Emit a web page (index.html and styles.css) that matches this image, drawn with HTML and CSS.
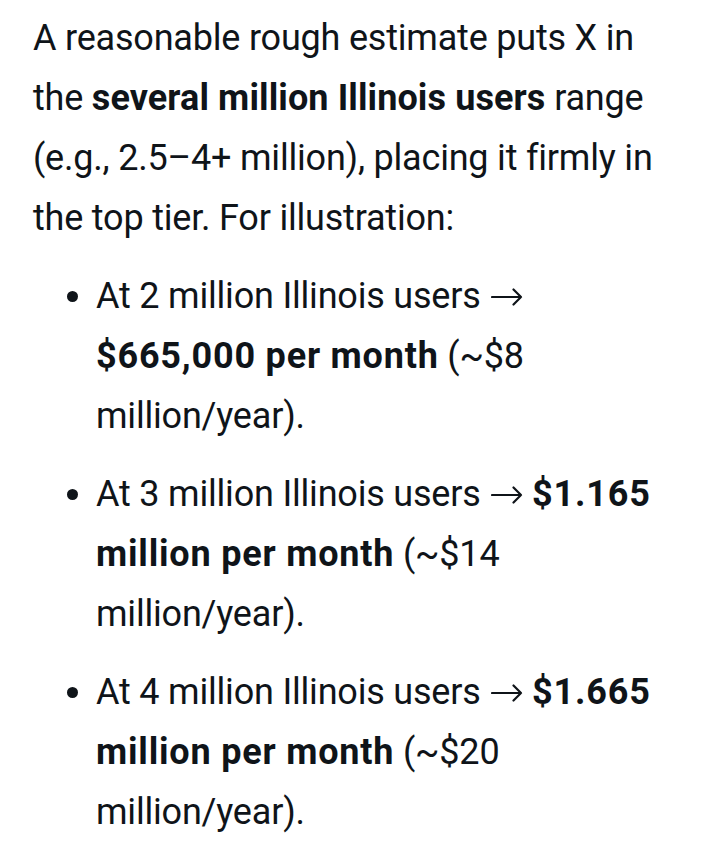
FILE: index.html
```html
<!DOCTYPE html>
<html>
<head>
<meta charset="utf-8">
<link rel="stylesheet" href="styles.css">
</head>
<body>
<div class="content">
  <p class="para">A reasonable rough estimate puts X in the <strong>several million Illinois users</strong> range (e.g., 2.5–4+ million), placing it firmly in the top tier. For illustration:</p>
  <ul class="list">
    <li>At 2 million Illinois users <svg class="arrow" viewBox="0 0 32 18" aria-label="→"><path d="M1 9H30M22.5 1.5L30 9L22.5 16.5"/></svg> <strong>$665,000 per month</strong> (~$8 million/year).</li>
    <li>At 3 million Illinois users <svg class="arrow" viewBox="0 0 32 18" aria-label="→"><path d="M1 9H30M22.5 1.5L30 9L22.5 16.5"/></svg> <strong>$1.165 million per month</strong> (~$14 million/year).</li>
    <li>At 4 million Illinois users <svg class="arrow" viewBox="0 0 32 18" aria-label="→"><path d="M1 9H30M22.5 1.5L30 9L22.5 16.5"/></svg> <strong>$1.665 million per month</strong> (~$20 million/year).</li>
  </ul>
</div>
</body>
</html>
```
FILE: styles.css
```css
html, body {
  margin: 0;
  padding: 0;
  background: #ffffff;
}
.content {
  width: 627px;
  padding: 8px 0 0 33px;
  font-family: Roboto, "Noto Sans", sans-serif;
  font-size: 36px;
  letter-spacing: -0.2px;
  line-height: 60px;
  color: #0f1419;
}
.para {
  margin: 0;
}
.list {
  margin: 18px 0 0 0;
  padding-left: 63px;
}
.list li {
  margin-bottom: 18px;
}
.arrow {
  width: 32px;
  height: 18px;
  vertical-align: 2px;
  margin-left: 2px;
  fill: none;
  stroke: #0f1419;
  stroke-width: 2.2;
  stroke-linecap: round;
  stroke-linejoin: round;
}
strong {
  font-weight: 700;
  letter-spacing: 0.8px;
}
.para strong {
  letter-spacing: 0.1px;
}
```
